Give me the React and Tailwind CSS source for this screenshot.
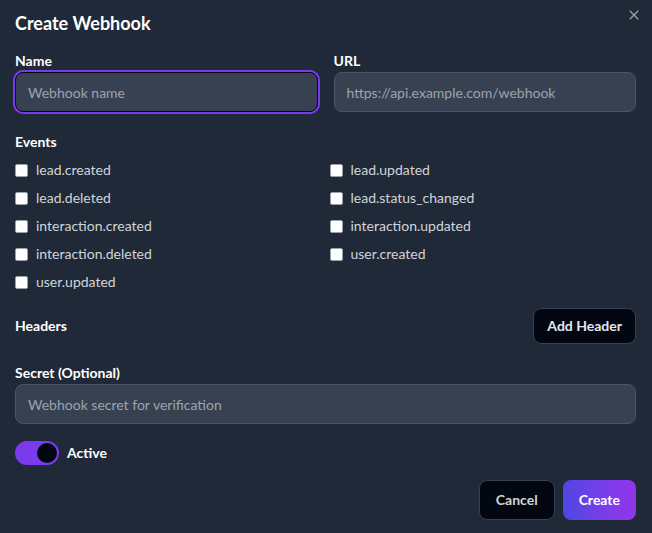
import { useState } from 'react'
import { X } from 'lucide-react'

const events = [
  'lead.created',
  'lead.updated',
  'lead.deleted',
  'lead.status_changed',
  'interaction.created',
  'interaction.updated',
  'interaction.deleted',
  'user.created',
  'user.updated',
]

const inputBase =
  'h-10 w-full rounded-lg border bg-[#374151] px-3 text-sm text-gray-100 placeholder:text-[#9ca3af] outline-none'

export default function App() {
  const [active, setActive] = useState(true)
  const [selected, setSelected] = useState([])

  const toggle = (ev) =>
    setSelected((s) => (s.includes(ev) ? s.filter((x) => x !== ev) : [...s, ev]))

  return (
    <div className="min-h-[533px] w-[652px] bg-[#1f2937] font-['Lato',sans-serif] text-white">
      <div className="relative pl-[15px] pr-4 pt-[9px] pb-[13px]">
        <button className="absolute right-[10px] top-[7px] text-[#9ca3af]">
          <X className="h-4 w-4" strokeWidth={1.75} />
        </button>

        <h2 className="text-lg font-bold leading-7 text-white">Create Webhook</h2>

        <div className="mt-[14px] grid grid-cols-2 gap-4">
          <div>
            <label className="block text-sm font-bold leading-5">Name</label>
            <input
              autoFocus
              placeholder="Webhook name"
              className={`${inputBase} mt-px border-[#030712] ring-2 ring-[#7c3aed]`}
            />
          </div>
          <div>
            <label className="block text-sm font-bold leading-5">URL</label>
            <input
              placeholder="https://api.example.com/webhook"
              className={`${inputBase} mt-px border-[#4b5563]`}
            />
          </div>
        </div>

        <div className="mt-5">
          <p className="text-sm font-bold leading-5">Events</p>
          <div className="mt-2 grid grid-cols-2 gap-x-2 gap-y-2">
            {events.map((ev) => (
              <label key={ev} className="flex h-5 items-center gap-2 text-sm text-[#d1d5db]">
                <input
                  type="checkbox"
                  checked={selected.includes(ev)}
                  onChange={() => toggle(ev)}
                  className="m-0 h-[13px] w-[13px] appearance-none rounded-[2px] border border-gray-400 bg-white checked:bg-[#7c3aed]"
                />
                {ev}
              </label>
            ))}
          </div>
        </div>

        <div className="mt-4 flex items-center justify-between">
          <p className="text-sm font-bold leading-5">Headers</p>
          <button className="h-9 rounded-lg border border-[#374151] bg-[#030712] px-[13px] text-sm font-bold text-[#e5e7eb]">
            Add Header
          </button>
        </div>

        <div className="mt-[19px]">
          <label className="block text-sm font-bold leading-5">Secret (Optional)</label>
          <input
            placeholder="Webhook secret for verification"
            className={`${inputBase} mt-px border-[#4b5563]`}
          />
        </div>

        <div className="mt-[17px] flex items-center gap-2">
          <button
            onClick={() => setActive(!active)}
            className={`flex h-6 w-11 items-center rounded-full p-[2px] ${active ? 'justify-end bg-[#7c3aed]' : 'justify-start bg-gray-600'}`}
          >
            <span className="h-5 w-5 rounded-full bg-[#030712]" />
          </button>
          <span className="text-sm font-bold">Active</span>
        </div>

        <div className="mt-[15px] flex justify-end gap-2">
          <button className="h-10 rounded-lg border border-[#374151] bg-[#030712] px-4 text-sm font-bold text-[#d1d5db]">
            Cancel
          </button>
          <button className="h-10 rounded-lg bg-gradient-to-r from-[#4f46e5] to-[#9333ea] px-4 text-sm font-bold text-white">
            Create
          </button>
        </div>
      </div>
    </div>
  )
}
